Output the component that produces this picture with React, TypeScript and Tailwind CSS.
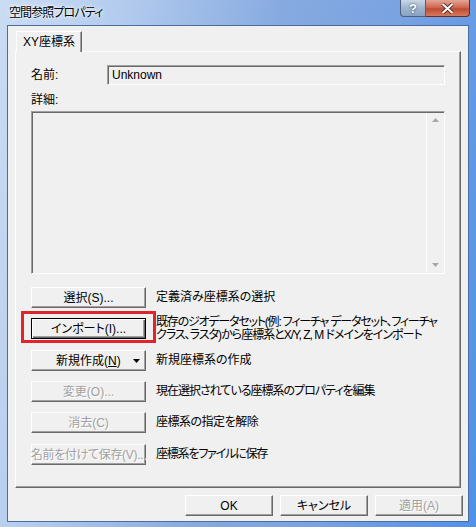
import type { ReactNode } from 'react'

const FONT = "font-['Liberation_Sans','Noto_Sans_CJK_JP',sans-serif]"

function Btn({
  children,
  disabled,
  focused,
  className = '',
}: {
  children: ReactNode
  disabled?: boolean
  focused?: boolean
  className?: string
}) {
  return (
    <div
      className={`relative flex items-center shrink-0 h-[21px] bg-[#f0f0f0] text-[12px] leading-none whitespace-nowrap [font-feature-settings:'palt'] ${
        focused
          ? 'border border-black shadow-[inset_1px_1px_0_#fff,inset_-1px_-1px_0_#696969,inset_-2px_-2px_0_#a0a0a0]'
          : 'border border-t-white border-l-white border-r-[#696969] border-b-[#696969] shadow-[inset_-1px_-1px_0_#a0a0a0]'
      } ${disabled ? 'text-[#a0a0a0] [text-shadow:1px_1px_0_#fff]' : 'text-black'} ${className}`}
    >
      {children}
    </div>
  )
}

function Row({
  btn,
  text,
  className = '',
  textClass = '',
}: {
  btn: ReactNode
  text: ReactNode
  className?: string
  textClass?: string
}) {
  return (
    <div className={`flex items-center gap-[10px] h-[21px] ${className}`}>
      {btn}
      <div className={`text-[12px] leading-[13px] text-black whitespace-nowrap [font-feature-settings:'palt'] ${textClass}`}>
        {text}
      </div>
    </div>
  )
}

function Arrow({ up }: { up?: boolean }) {
  return (
    <svg width="7" height="4" viewBox="0 0 7 4" className="block">
      <path d={up ? 'M0 4 L3.5 0 L7 4 Z' : 'M0 0 L3.5 4 L7 0 Z'} fill="#a8a8a8" />
    </svg>
  )
}

export default function App() {
  return (
    <div
      className={`w-[476px] h-[527px] overflow-hidden flex flex-col ${FONT} bg-[linear-gradient(100deg,#cadcf3_0%,#b3cbee_22%,#86aae0_50%,#7aa3e2_70%,#4f91ea_100%)]`}
    >
      {/* title bar */}
      <div className="h-[25px] shrink-0 flex items-start">
        <div className="pl-[9px] pt-[5px] text-[12px] leading-[16px] tracking-[-0.9px] text-black [text-shadow:0_0_6px_#fff,0_0_3px_#fff] [font-feature-settings:'palt']">
          空間参照プロパティ
        </div>
        <div className="ml-auto mr-[6px] flex">
          <div className="w-[26px] h-[17px] rounded-bl-[4px] border border-t-0 border-[#4c607c] bg-[linear-gradient(#c9d6e6,#9fb4cf_50%,#8aa2c2)] flex items-center justify-center text-white font-bold text-[13px] leading-none [text-shadow:0_0_2px_#233]">
            ?
          </div>
          <div className="w-[44px] h-[17px] rounded-br-[4px] border border-t-0 border-l-0 border-[#6b2a22] bg-[linear-gradient(#e3a595,#cf6a55_45%,#c14a33_55%,#d47a5e)] flex items-center justify-center">
            <svg width="13" height="11" viewBox="0 0 13 11">
              <path d="M1.5 1 L11.5 10 M11.5 1 L1.5 10" stroke="#3a1410" strokeWidth="3.6" />
              <path d="M1.5 1 L11.5 10 M11.5 1 L1.5 10" stroke="#fff" strokeWidth="2.2" />
            </svg>
          </div>
        </div>
      </div>

      {/* client area */}
      <div className="mx-[7px] h-[497px] shrink-0 bg-[#f0f0f0] border border-[#4b6d9e] pl-[7px] pt-[5px] flex flex-col">
        {/* tab header */}
        <div className="flex h-[20px] relative z-10">
          <div className="ml-[1px] w-[66px] h-[21px] bg-[#f0f0f0] border-t border-l border-white border-r border-r-[#696969] shadow-[inset_-1px_0_0_#a0a0a0] pl-[6px] pt-[4px] text-[12px] leading-[12px] text-black [font-feature-settings:'palt']">
            XY座標系
          </div>
        </div>

        {/* panel */}
        <div className="w-[446px] h-[437px] border border-t-white border-l-white border-r-[#696969] border-b-[#696969] shadow-[inset_-1px_-1px_0_#a0a0a0] pl-[15px] pt-[13px] flex flex-col">
          <div className="flex items-center h-[20px]">
            <div className="w-[76px] text-[12px] leading-[12px] text-black">名前:</div>
            <div className="w-[338px] h-[20px] border border-t-[#a0a0a0] border-l-[#a0a0a0] border-r-white border-b-white shadow-[inset_1px_1px_0_#696969] pl-[4px] flex items-center text-[12px] text-black">
              Unknown
            </div>
          </div>
          <div className="mt-[8px] h-[14px] text-[12px] leading-[14px] text-black">詳細:</div>
          <div className="mt-[4px] w-[414px] h-[163px] border border-t-[#a0a0a0] border-l-[#a0a0a0] border-r-white border-b-white shadow-[inset_1px_1px_0_#696969] flex justify-end pt-[1px] pr-[1px] pb-[1px]">
            <div className="w-[17px] h-full border-l border-white flex flex-col items-center justify-between py-[5px]">
              <Arrow up />
              <Arrow />
            </div>
          </div>

          <Row
            className="mt-[13px]"
            btn={<Btn className="w-[115px] justify-center">選択(S)...</Btn>}
            text="定義済み座標系の選択"
          />
          <div className="relative mt-[10px]">
            <div className="absolute left-[-10px] top-[-7px] w-[135px] h-[32px] border-[3px] border-[#e0242c] pointer-events-none" />
            <Row
              btn={
                <Btn focused className="w-[115px] justify-center">
                  インポート(I)...
                </Btn>
              }
              text={
                <>
                  <div className="tracking-[-1.2px]">既存のジオデータセット(例: フィーチャ データセット、フィーチャ</div>
                  <div className="tracking-[-1px]">クラス、ラスタ)から座標系とX/Y, Z, M ドメインをインポート</div>
                </>
              }
            />
          </div>
          <Row
            className="mt-[11px]"
            btn={
              <Btn className="w-[115px] pl-[24px]">
                <span>
                  新規作成(<span className="underline">N</span>)
                </span>
                <svg width="7" height="4" viewBox="0 0 7 4" className="ml-auto mr-[5px]">
                  <path d="M0 0 L3.5 4 L7 0 Z" fill="#000" />
                </svg>
              </Btn>
            }
            text="新規座標系の作成"
          />
          <Row
            className="mt-[10px]"
            btn={
              <Btn disabled className="w-[115px] justify-center">
                変更(O)...
              </Btn>
            }
            text="現在選択されている座標系のプロパティを編集"
            textClass="tracking-[-1px]"
          />
          <Row
            className="mt-[10px]"
            btn={
              <Btn disabled className="w-[115px] justify-center">
                消去(C)
              </Btn>
            }
            text="座標系の指定を解除"
            textClass="tracking-[-0.5px]"
          />
          <Row
            className="mt-[11px]"
            btn={
              <Btn disabled className="w-[115px] justify-center tracking-[-0.3px]">
                名前を付けて保存(V)...
              </Btn>
            }
            text="座標系をファイルに保存"
            textClass="tracking-[-1.2px]"
          />
        </div>

        {/* dialog buttons */}
        <div className="mt-[7px] w-[448px] flex justify-end gap-[7px]">
          <Btn className="w-[88px] justify-center">OK</Btn>
          <Btn className="w-[88px] justify-center">キャンセル</Btn>
          <Btn disabled className="w-[88px] justify-center">
            適用(A)
          </Btn>
        </div>
      </div>
    </div>
  )
}
